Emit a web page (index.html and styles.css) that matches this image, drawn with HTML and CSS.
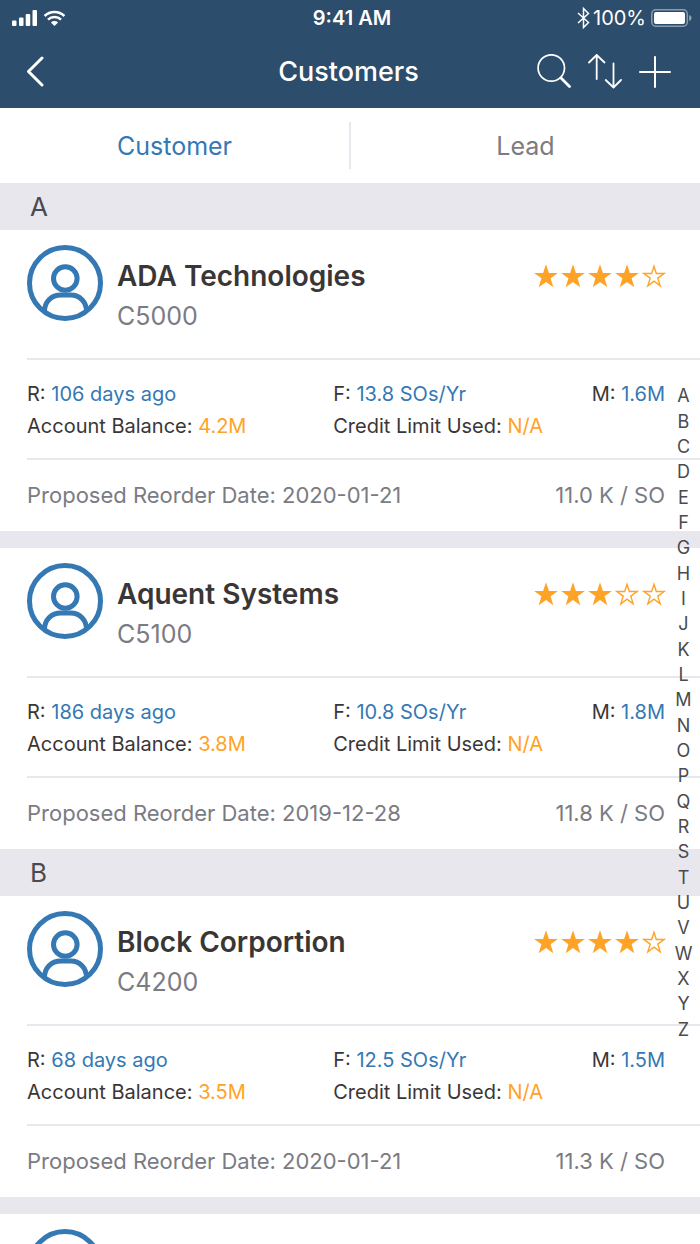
FILE: index.html
```html
<!DOCTYPE html>
<html lang="en">
<head>
<meta charset="utf-8">
<meta name="viewport" content="width=device-width, initial-scale=1">
<title>Customers</title>
<link rel="stylesheet" href="styles.css">
</head>
<body>
<svg class="defs" aria-hidden="true">
  <symbol id="avatar" viewBox="0 0 76 76">
    <g fill="none" stroke="currentColor" stroke-width="5">
      <circle cx="38" cy="38" r="35.5"/>
      <circle cx="38.300" cy="33.500" r="11.800"/>
      <path d="M17.500 66.500C17.500 57 24 50 34 50h9.500c9.500 0 16 7 16 16.500"/>
    </g>
  </symbol>
  <symbol id="star" viewBox="0 0 24 24">
    <path fill="currentColor" d="M12 .3l2.900 8.600h9l-7.300 5.400 2.700 8.900L12 18l-7.300 5.200 2.700-8.900L.1 8.900h9z"/>
  </symbol>
  <symbol id="star-empty" viewBox="0 0 24 24">
    <path fill="none" stroke="currentColor" stroke-width="1.400" d="M12 2.300l2.300 7.200h7.900l-6.400 4.600 2.400 7.700L12 17.200l-6.200 4.600 2.400-7.700-6.400-4.600h7.900z"/>
  </symbol>
</svg>
<div class="screen">
  <header class="top">
    <div class="status">
      <div class="status-side">
        <svg width="54" height="18" viewBox="0 0 54 18" fill="#fff" role="img" aria-label="Signal and Wi-Fi">
          <rect x="0" y="11.500" width="4.500" height="5.500" rx="1"/>
          <rect x="7" y="8.500" width="4.500" height="8.500" rx="1"/>
          <rect x="13.700" y="5" width="4.500" height="12" rx="1"/>
          <rect x="20.500" y="1" width="4.500" height="16" rx="1"/>
          <g fill="none" stroke="#fff" stroke-width="2.500">
            <path d="M32.600 7a14 14 0 0 1 19.800 0"/>
            <path d="M36 10.700a9.200 9.200 0 0 1 13 0"/>
          </g>
          <path d="M42.500 17l-3.600-3.600a5.200 5.200 0 0 1 7.200 0z"/>
        </svg>
      </div>
      <div class="clock">9:41 AM</div>
      <div class="status-side status-right">
        <svg width="13" height="22" viewBox="0 0 13 22" fill="none" stroke="#fff" stroke-width="1.500" role="img" aria-label="Bluetooth"><path d="M1 6l10.500 9.500L6.500 20.500V1.500l5 5L1 16"/></svg>
        <span>100%</span>
        <svg class="battery" width="41" height="18" viewBox="0 0 41 18" role="img" aria-label="Battery full">
          <rect x=".8" y=".8" width="35.500" height="16.400" rx="4" fill="none" stroke="#fff" stroke-opacity=".45" stroke-width="1.500"/>
          <rect x="3" y="3" width="31" height="12" rx="2" fill="#fff"/>
          <path d="M38.200 6v6c3-1 3-5 0-6z" fill="#fff" fill-opacity=".5"/>
        </svg>
      </div>
    </div>
    <nav class="bar">
      <div class="bar-side">
        <button class="icon" aria-label="Back"><svg width="18" height="32" viewBox="0 0 18 32" fill="none" stroke="#fff" stroke-width="3" stroke-linecap="round" stroke-linejoin="round"><path d="M16 2L2.500 15.500 16 29"/></svg></button>
      </div>
      <h1>Customers</h1>
      <div class="bar-side bar-actions">
        <button class="icon" aria-label="Search"><svg width="36" height="36" viewBox="0 0 36 36" fill="none" stroke="#fff" stroke-linecap="round"><circle cx="16.300" cy="14" r="13.200" stroke-width="1.700"/><path d="M26 24l8.500 8.500" stroke-width="2.800"/></svg></button>
        <button class="icon" aria-label="Sort"><svg width="34" height="36" viewBox="0 0 34 36" fill="none" stroke="#fff" stroke-width="1.800" stroke-linecap="round" stroke-linejoin="round"><path d="M8.700 25V1M1 8.500L8.700 1l7.800 7.500M25.500 9.500V33M17.700 26l7.800 7.500L33 26"/></svg></button>
        <button class="icon" aria-label="Add"><svg width="32" height="32" viewBox="0 0 32 32" stroke="#fff" stroke-width="2" stroke-linecap="round"><path d="M16 1v30M1 16h30"/></svg></button>
      </div>
    </nav>
  </header>
  <div class="tabs" role="tablist">
    <button class="tab active" role="tab" aria-selected="true">Customer</button>
    <button class="tab" role="tab" aria-selected="false">Lead</button>
  </div>
  <main class="content">
    <div class="list">
      <h2 class="letter">A</h2>
      <article class="card">
        <div class="head">
          <svg class="avatar"><use href="#avatar"/></svg>
          <div class="who"><h3>ADA Technologies</h3><p>C5000</p></div>
          <div class="stars" role="img" aria-label="4 of 5 stars"><svg><use href="#star"/></svg><svg><use href="#star"/></svg><svg><use href="#star"/></svg><svg><use href="#star"/></svg><svg><use href="#star-empty"/></svg></div>
        </div>
        <div class="stats">
          <div>R: <b>106 days ago</b></div><div>F: <b>13.8 SOs/Yr</b></div><div>M: <b>1.6M</b></div>
          <div>Account Balance: <em>4.2M</em></div><div class="wide">Credit Limit Used: <em>N/A</em></div>
        </div>
        <div class="reorder"><span>Proposed Reorder Date: 2020-01-21</span><span>11.0 K / SO</span></div>
      </article>
      <article class="card spaced">
        <div class="head">
          <svg class="avatar"><use href="#avatar"/></svg>
          <div class="who"><h3>Aquent Systems</h3><p>C5100</p></div>
          <div class="stars" role="img" aria-label="3 of 5 stars"><svg><use href="#star"/></svg><svg><use href="#star"/></svg><svg><use href="#star"/></svg><svg><use href="#star-empty"/></svg><svg><use href="#star-empty"/></svg></div>
        </div>
        <div class="stats">
          <div>R: <b>186 days ago</b></div><div>F: <b>10.8 SOs/Yr</b></div><div>M: <b>1.8M</b></div>
          <div>Account Balance: <em>3.8M</em></div><div class="wide">Credit Limit Used: <em>N/A</em></div>
        </div>
        <div class="reorder"><span>Proposed Reorder Date: 2019-12-28</span><span>11.8 K / SO</span></div>
      </article>
      <h2 class="letter">B</h2>
      <article class="card">
        <div class="head">
          <svg class="avatar"><use href="#avatar"/></svg>
          <div class="who"><h3>Block Corportion</h3><p>C4200</p></div>
          <div class="stars" role="img" aria-label="4 of 5 stars"><svg><use href="#star"/></svg><svg><use href="#star"/></svg><svg><use href="#star"/></svg><svg><use href="#star"/></svg><svg><use href="#star-empty"/></svg></div>
        </div>
        <div class="stats">
          <div>R: <b>68 days ago</b></div><div>F: <b>12.5 SOs/Yr</b></div><div>M: <b>1.5M</b></div>
          <div>Account Balance: <em>3.5M</em></div><div class="wide">Credit Limit Used: <em>N/A</em></div>
        </div>
        <div class="reorder"><span>Proposed Reorder Date: 2020-01-21</span><span>11.3 K / SO</span></div>
      </article>
      <article class="card spaced">
        <div class="head"><svg class="avatar"><use href="#avatar"/></svg></div>
      </article>
    </div>
    <nav class="index" aria-label="Alphabet">
      <a href="#">A</a><a href="#">B</a><a href="#">C</a><a href="#">D</a><a href="#">E</a><a href="#">F</a><a href="#">G</a><a href="#">H</a><a href="#">I</a><a href="#">J</a><a href="#">K</a><a href="#">L</a><a href="#">M</a><a href="#">N</a><a href="#">O</a><a href="#">P</a><a href="#">Q</a><a href="#">R</a><a href="#">S</a><a href="#">T</a><a href="#">U</a><a href="#">V</a><a href="#">W</a><a href="#">X</a><a href="#">Y</a><a href="#">Z</a>
    </nav>
  </main>
</div>
</body>
</html>
```
FILE: styles.css
```css
* { box-sizing: border-box; }
body, h1, h2, h3, p { margin: 0; }
body { font-family: Inter, "Liberation Sans", sans-serif; color: #3b3636; background: #fff; }
button { border: 0; padding: 0; background: none; font: inherit; cursor: pointer; }
svg { display: block; flex: none; }
.defs { position: absolute; width: 0; height: 0; }
.screen { display: flex; flex-direction: column; height: 100vh; overflow: hidden; }

.top { flex: none; background: #2c4d6b; color: #fff; }
.status { display: flex; align-items: center; height: 36px; padding: 0 8px 0 12px; font-size: 20px; }
.status-side { flex: 1; display: flex; align-items: center; }
.status-right { justify-content: flex-end; gap: 3px; }
.battery { margin-left: 2px; }
.clock { font-weight: 600; }
.bar { display: flex; align-items: center; height: 72px; padding: 0 29px 0 26px; }
.bar-side { flex: 1; display: flex; align-items: center; }
.bar-actions { justify-content: flex-end; gap: 17px; }
.bar h1 { font-size: 27px; line-height: 36px; font-weight: 500; }

.tabs { flex: none; display: flex; height: 75px; padding: 14px 0; }
.tab { flex: 1; font-size: 25px; color: #7b7b82; }
.tab + .tab { border-left: 2px solid #e8e7ed; }
.tab.active { color: #3478b4; }

.content { position: relative; flex: 1; min-height: 0; }
.list { height: 100%; overflow-y: auto; scrollbar-width: none; }
.letter { padding: 0 30px; font-size: 26px; line-height: 47px; font-weight: 400; color: #4a4a4f; background: #e8e7ed; }
.card { padding-left: 27px; }
.card.spaced { border-top: 17px solid #e8e7ed; }
.head { display: flex; gap: 14px; padding: 15px 34px 22px 0; }
.avatar { width: 76px; height: 76px; color: #3478b4; }
.who { flex: 1; padding-top: 11px; line-height: 40px; }
.who h3 { font-size: 28px; font-weight: 600; }
.who p { font-size: 25px; color: #7b7b82; }
.stars { display: flex; gap: 3px; padding-top: 19px; color: #ffa326; }
.stars svg { width: 24px; height: 24px; }
.stats { display: grid; grid-template-columns: 48% 1fr auto; padding: 18px 35px 16px 0; border: solid #e8e7ed; border-width: 2px 0; font-size: 20px; line-height: 32px; }
.stats .wide { grid-column: span 2; }
.stats b { font-weight: 400; color: #3478b4; }
.stats em { font-style: normal; color: #ffa326; }
.reorder { display: flex; justify-content: space-between; padding: 0 35px 0 0; font-size: 22px; line-height: 71px; color: #7b7b82; }

.index { position: absolute; top: 200px; bottom: 202px; right: 0; width: 33px; display: flex; flex-direction: column; }
.index a { flex: 1; display: flex; align-items: center; justify-content: center; font-size: 18px; color: #4a4a4f; text-decoration: none; }
```
